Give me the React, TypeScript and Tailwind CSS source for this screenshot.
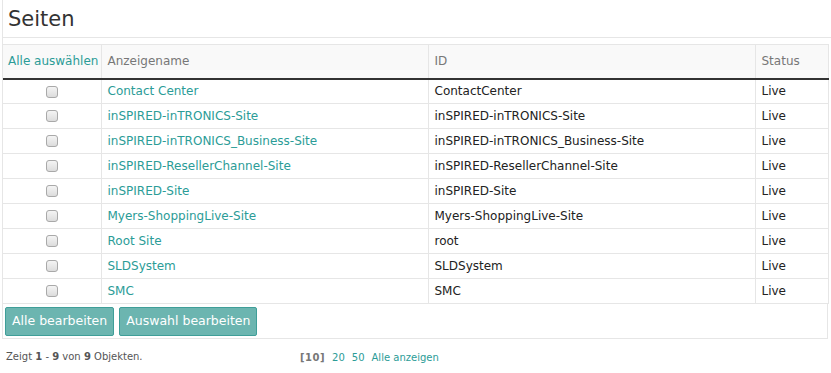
import React from 'react';

type Site = { name: string; id: string; status: string };

const sites: Site[] = [
  { name: 'Contact Center', id: 'ContactCenter', status: 'Live' },
  { name: 'inSPIRED-inTRONICS-Site', id: 'inSPIRED-inTRONICS-Site', status: 'Live' },
  { name: 'inSPIRED-inTRONICS_Business-Site', id: 'inSPIRED-inTRONICS_Business-Site', status: 'Live' },
  { name: 'inSPIRED-ResellerChannel-Site', id: 'inSPIRED-ResellerChannel-Site', status: 'Live' },
  { name: 'inSPIRED-Site', id: 'inSPIRED-Site', status: 'Live' },
  { name: 'Myers-ShoppingLive-Site', id: 'Myers-ShoppingLive-Site', status: 'Live' },
  { name: 'Root Site', id: 'root', status: 'Live' },
  { name: 'SLDSystem', id: 'SLDSystem', status: 'Live' },
  { name: 'SMC', id: 'SMC', status: 'Live' },
];

function Checkbox() {
  return (
    <span className="inline-block w-[12px] h-[12px] rounded-[3px] border border-[#a9a9a9] bg-gradient-to-b from-[#f4f4f4] to-[#dcdcdc] align-middle" />
  );
}

export default function App() {
  return (
    <div className="bg-white min-h-[373px] text-[#333] font-['DejaVu_Sans',Verdana,sans-serif]">
      <div className="ml-[2px] border-l border-[#e6e6e6]">
        <h1 className="h-[38px] border-b border-[#e6e6e6] pl-[5px] pt-[6px] text-[21px] leading-[26px] text-[#333]">
          Seiten
        </h1>
        <div className="h-[6px]" />
        <table className="w-[825px] table-fixed border-collapse text-[12px]">
          <colgroup>
            <col className="w-[98px]" />
            <col className="w-[327px]" />
            <col className="w-[327px]" />
            <col className="w-[73px]" />
          </colgroup>
          <thead>
            <tr className="h-[34px] bg-[#f9f9f9] border-t border-[#e6e6e6] border-b-2 border-b-[#333]">
              <th className="text-left font-normal px-[5px] text-[#2b9c97] border-r border-[#e6e6e6] whitespace-nowrap">
                Alle auswählen
              </th>
              <th className="text-left font-normal px-[6px] text-[#777] border-r border-[#e6e6e6]">Anzeigename</th>
              <th className="text-left font-normal px-[6px] text-[#777] border-r border-[#e6e6e6]">ID</th>
              <th className="text-left font-normal px-[6px] text-[#777] border-r border-[#e6e6e6]">Status</th>
            </tr>
          </thead>
          <tbody>
            {sites.map((s) => (
              <tr key={s.id} className="h-[25px] border-b border-[#e6e6e6]">
                <td className="text-center border-r border-[#e6e6e6] leading-none">
                  <Checkbox />
                </td>
                <td className="px-[6px] text-[#2b9c97] border-r border-[#e6e6e6] whitespace-nowrap">{s.name}</td>
                <td className="px-[6px] text-[#222] border-r border-[#e6e6e6] whitespace-nowrap">{s.id}</td>
                <td className="px-[6px] text-[#222] border-r border-[#e6e6e6]">{s.status}</td>
              </tr>
            ))}
          </tbody>
        </table>
        <div className="w-[825px] border-r border-b border-[#e6e6e6] flex gap-[5px] pl-[2px] pt-[3px] pb-[2px]">
          <button className="h-[29px] px-[6px] rounded-[2px] border border-[#3f9e98] bg-[#6cb5b0] text-white text-[12.5px]">
            Alle bearbeiten
          </button>
          <button className="h-[29px] px-[6px] rounded-[2px] border border-[#3f9e98] bg-[#6cb5b0] text-white text-[12.5px]">
            Auswahl bearbeiten
          </button>
        </div>
      </div>
      <div className="flex items-center pt-[8px] text-[10px] text-[#555]">
        <div className="pl-[6px] w-[300px]">
          Zeigt <b>1</b> - <b>9</b> von <b>9</b> Objekten.
        </div>
        <div className="flex gap-[7px] pt-[3px]">
          <b className="text-[#777] tracking-[0.5px]">[10]</b>
          <span className="text-[#2b9c97]">20</span>
          <span className="text-[#2b9c97]">50</span>
          <span className="text-[#2b9c97]">Alle anzeigen</span>
        </div>
      </div>
    </div>
  );
}
